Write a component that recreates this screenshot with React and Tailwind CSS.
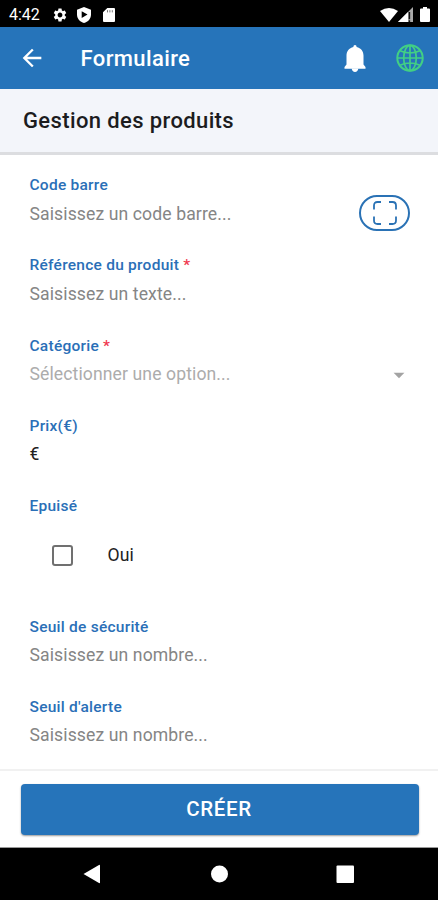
import React, { useState } from 'react';
import { MdSettings, MdArrowBack, MdArrowDropDown } from 'react-icons/md';

function StatusBar() {
  return (
    <div className="h-[27px] shrink-0 bg-black flex items-center justify-between pl-[9px] pr-[8px] pt-[2px] text-white">
      <div className="flex items-center">
        <span className="w-[43px] text-[16px] leading-none">4:42</span>
        <MdSettings className="w-4 h-4" />
        <svg className="w-[14px] h-[16px] ml-[9px]" viewBox="0 0 14 16">
          <path d="M7 0L14 2.8V7.5C14 11.5 11 15 7 16C3 15 0 11.5 0 7.5V2.8Z" fill="currentColor" />
          <path d="M4.7 4.2V11L10.5 7.6Z" fill="#000" />
        </svg>
        <svg className="w-[12px] h-[14px] ml-[12px]" viewBox="0 0 12 14">
          <path d="M4.3 0H11Q12 0 12 1V13Q12 14 11 14H1Q0 14 0 13V4.3Z" fill="currentColor" />
          <path d="M4.5 2.2V4.4M6.9 2.2V4.4M9.3 2.2V4.4" stroke="#666" strokeWidth="0.9" />
        </svg>
      </div>
      <div className="flex items-center">
        <svg className="w-[18px] h-[14px]" viewBox="0 0 18 14">
          <path d="M0 3Q9 -3 18 3L9 14Z" fill="currentColor" />
        </svg>
        <svg className="w-[15px] h-[15px]" viewBox="0 0 15 15">
          <path d="M0 15L15 0V15Z" fill="#aaa" />
          <path d="M0 15L10 5V15Z" fill="currentColor" />
          <path d="M11.4 5V12.2M11.4 13.2V15" stroke="#111" strokeWidth="1.5" />
        </svg>
        <svg className="w-[10px] h-[15px] ml-[7px]" viewBox="0 0 10 15">
          <path d="M3 0H7V1.5H9Q10 1.5 10 2.5V14Q10 15 9 15H1Q0 15 0 14V2.5Q0 1.5 1 1.5H3Z" fill="currentColor" />
        </svg>
      </div>
    </div>
  );
}

function Header() {
  return (
    <header className="h-[62px] shrink-0 bg-[#2674ba] flex items-center pl-[18px] pr-[14px] text-white">
      <button><MdArrowBack className="w-[28px] h-[28px]" /></button>
      <h1 className="ml-[34.5px] pt-[1px] text-[22px] leading-none font-medium tracking-[0.38px]">Formulaire</h1>
      <button className="ml-auto">
        <svg className="w-[22px] h-[27px]" viewBox="0 0 22 27">
          <path d="M11 0C12 0 12.6 .8 12.6 2C17 3 19.5 6.3 19.5 10.5V19.5L21.5 22V23.7H.5V22L2.5 19.5V10.5C2.5 6.3 5 3 9.4 2C9.4 .8 10 0 11 0Z" fill="currentColor" />
          <path d="M7.7 23.5H14.3C14 25.8 12.8 27 11 27C9.2 27 8 25.8 7.7 23.5Z" fill="currentColor" />
        </svg>
      </button>
      <button className="ml-[30px]">
        <svg className="w-[28px] h-[28px]" viewBox="0 0 28 28" fill="none" stroke="#42cf84" strokeWidth="1.7">
          <circle cx="14" cy="14" r="12.7" strokeWidth="2" />
          <ellipse cx="14" cy="14" rx="6.3" ry="12.7" />
          <path d="M14 1V27M1 14H27M4 6.8Q14 11.2 24 6.8M4 21.2Q14 16.8 24 21.2" />
        </svg>
      </button>
    </header>
  );
}

function Field({ label, required, children }) {
  return (
    <div className="h-[80.3px] shrink-0">
      <div className="h-[18px] flex items-center text-[15.5px] leading-none font-medium tracking-[0.25px] text-[#2a6fb7]">
        {label}
        {required && <span className="ml-1 text-[#f0384f]">*</span>}
      </div>
      <div className="h-[39px] flex items-center text-[17.6px] leading-none tracking-[0.1px] text-[#858585]">
        {children}
      </div>
    </div>
  );
}

function ScanButton() {
  return (
    <button className="ml-auto mb-[2px] w-[51px] h-[36px] rounded-full border-2 border-[#2a72b5] flex items-center justify-center">
      <svg className="w-6 h-6" viewBox="0 0 24 24" fill="none" stroke="#2a72b5" strokeWidth="1.8">
        <path d="M1 8.5V4.5Q1 1 4.5 1H8M16 1H19.5Q23 1 23 4.5V8.5M23 15.5V19.5Q23 23 19.5 23H16M8 23H4.5Q1 23 1 19.5V15.5" />
      </svg>
    </button>
  );
}

export default function App() {
  const [soldOut, setSoldOut] = useState(false);

  return (
    <div className="w-full h-[900px] flex flex-col overflow-hidden bg-white font-[Roboto,sans-serif]">
      <StatusBar />
      <Header />

      <div className="h-[66px] shrink-0 bg-[#f3f5fa] border-b-[3px] border-[#dcdde0] flex items-center pl-[23px]">
        <h2 className="text-[22px] leading-none font-medium tracking-[0.38px] text-[#1c1c1e]">Gestion des produits</h2>
      </div>

      <main className="flex-1 min-h-0 flex flex-col pt-[21.8px] pl-[29.5px] pr-[28px]">
        <Field label="Code barre">
          <span>Saisissez un code barre...</span>
          <ScanButton />
        </Field>
        <Field label="Référence du produit" required>Saisissez un texte...</Field>
        <Field label="Catégorie" required>
          <span className="text-[#acacac]">Sélectionner une option...</span>
          <MdArrowDropDown className="ml-auto -mr-[2px] w-[26px] h-[26px] text-[#a3a3a3]" />
        </Field>
        <Field label="Prix(€)">
          <span className="text-[#222]">€</span>
        </Field>
        <div className="h-[120.5px] shrink-0">
          <div className="h-[18px] flex items-center text-[15.5px] leading-none font-medium tracking-[0.25px] text-[#2a6fb7]">Epuisé</div>
          <label className="h-[80px] flex items-center pl-[22px] text-[17.6px] leading-none text-[#222] tracking-[0.1px]">
            <input
              type="checkbox"
              checked={soldOut}
              onChange={e => setSoldOut(e.target.checked)}
              className="appearance-none w-[21px] h-[21px] rounded-[3px] border-2 border-[#707070] checked:bg-[#2674ba] mr-[35px]"
            />
            Oui
          </label>
        </div>
        <Field label="Seuil de sécurité">Saisissez un nombre...</Field>
        <Field label="Seuil d'alerte">Saisissez un nombre...</Field>
      </main>

      <footer className="h-[79px] shrink-0 bg-white border-t-2 border-[#f1f1f1] border-b border-b-[#999] pl-[21px] pr-[19px] pt-[13px]">
        <button className="w-full h-[51px] pr-[2px] rounded bg-[#2674ba] text-white text-[20.5px] leading-none font-medium tracking-[0.6px] shadow-[0_1px_2px_rgba(0,0,0,0.4)]">
          CRÉER
        </button>
      </footer>

      <nav className="h-[52px] shrink-0 bg-black">
        <svg className="w-full h-full" viewBox="0 0 438 52" fill="#fff">
          <path d="M83.5 26L99 17Q100 16.5 100 17.5V34.5Q100 35.5 99 35Z" />
          <circle cx="219.5" cy="26" r="8.5" />
          <rect x="336.5" y="17.5" width="17.5" height="17.5" rx="1" />
        </svg>
      </nav>
    </div>
  );
}
